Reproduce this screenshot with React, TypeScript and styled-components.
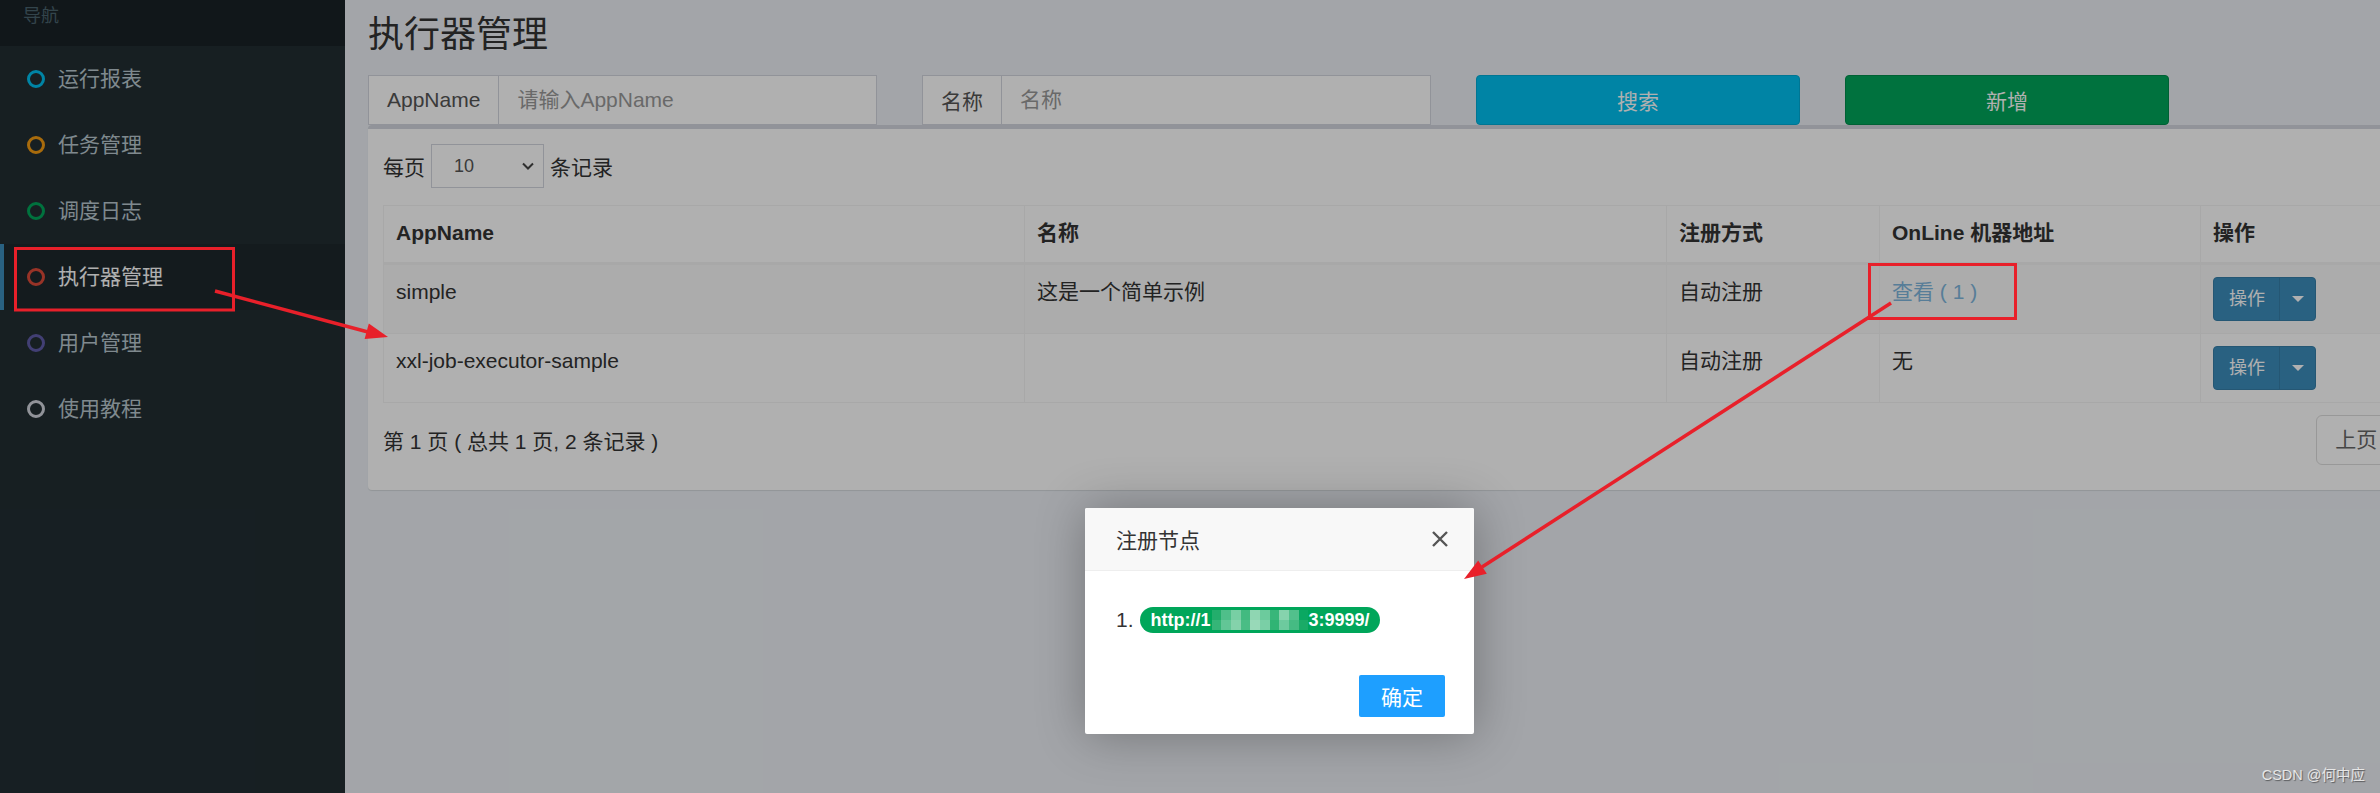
import React from 'react';
import styled, { createGlobalStyle } from 'styled-components';

const FONT = `'Liberation Sans', 'Noto Sans CJK SC', sans-serif`;

const GlobalStyle = createGlobalStyle`
  html, body {
    margin: 0;
    padding: 0;
  }
  body {
    font-family: ${FONT};
    font-size: 21px;
    color: #333;
    background: #ecf0f5;
  }
  * {
    box-sizing: border-box;
  }
`;

const Page = styled.div`
  position: relative;
  display: flex;
  width: 2380px;
  height: 793px;
  overflow: hidden;
`;

/* ---------- sidebar ---------- */

const Sidebar = styled.aside`
  width: 345px;
  flex-shrink: 0;
  background: #222d32;
`;

const NavHeader = styled.div`
  height: 46px;
  padding: 4px 0 0 23px;
  background: #1a2226;
  color: #4b646f;
  font-size: 18px;
  line-height: 24px;
`;

const MenuItem = styled.div<{ $active?: boolean }>`
  display: flex;
  align-items: center;
  gap: 13px;
  height: 66px;
  padding-left: 23px;
  border-left: 4px solid ${({ $active }) => ($active ? '#3c8dbc' : 'transparent')};
  background: ${({ $active }) => ($active ? '#1e282c' : 'transparent')};
  color: ${({ $active }) => ($active ? '#fff' : '#b8c7ce')};
  font-size: 21px;
  line-height: 30px;
`;

const Ring = styled.span<{ $color: string }>`
  flex-shrink: 0;
  width: 18px;
  height: 18px;
  border-radius: 50%;
  border: 3px solid ${({ $color }) => $color};
`;

/* ---------- content ---------- */

const Main = styled.main`
  flex: 1;
  min-width: 0;
  padding: 15px 0 0 23px;
  background: #ecf0f5;
`;

const Title = styled.h1`
  margin: 0;
  font-size: 36px;
  line-height: 40px;
  font-weight: 400;
  color: #333;
`;

const FilterRow = styled.div`
  display: flex;
  gap: 45px;
  margin-top: 20px;
`;

const InputGroup = styled.div`
  display: flex;
  width: 509px;
  height: 50px;
`;

const Addon = styled.span`
  display: flex;
  align-items: center;
  padding: 0 18px;
  border: 1px solid #d2d6de;
  background: #fff;
  color: #555;
`;

const TextInput = styled.input`
  flex: 1;
  min-width: 0;
  padding: 0 18px;
  border: 1px solid #d2d6de;
  border-left: 0;
  background: #fff;
  font-family: ${FONT};
  font-size: 21px;
  color: #555;
  outline: none;
  &::placeholder {
    color: #999;
  }
`;

const ActionButton = styled.button<{ $bg: string; $border: string }>`
  width: 324px;
  height: 50px;
  border-radius: 4px;
  border: 1px solid ${({ $border }) => $border};
  background: ${({ $bg }) => $bg};
  color: #fff;
  font-family: ${FONT};
  font-size: 21px;
`;

const Box = styled.section`
  width: 2171px;
  padding: 15px 15px 25px;
  border-top: 4px solid #d2d6de;
  border-radius: 4px;
  background: #fff;
  box-shadow: 0 1px 1px rgba(0, 0, 0, 0.1);
`;

const LengthRow = styled.div`
  display: flex;
  align-items: center;
  gap: 6px;
  height: 44px;
`;

const SelectBox = styled.div`
  display: flex;
  align-items: center;
  justify-content: space-between;
  width: 113px;
  height: 44px;
  padding: 0 8px 0 22px;
  border: 1px solid #d2d6de;
  font-size: 18px;
  color: #555;
`;

const Table = styled.table`
  width: 2140px;
  margin-top: 17px;
  border-collapse: collapse;
  table-layout: fixed;

  th,
  td {
    padding: 12px;
    border: 1px solid #f4f4f4;
    text-align: left;
    vertical-align: top;
    line-height: 30px;
  }

  th {
    padding-bottom: 14px;
    border-bottom: 3px solid #f4f4f4;
    font-weight: 700;
  }
`;

const Row = styled.tr<{ $striped?: boolean }>`
  background: ${({ $striped }) => ($striped ? '#f9f9f9' : 'transparent')};
`;

const Link = styled.span`
  color: #7fb6dc;
`;

const SplitButton = styled.div`
  display: inline-flex;
  height: 44px;
  border: 1px solid #367fa9;
  border-radius: 4px;
  overflow: hidden;
  background: #3c8dbc;
  color: #fff;
  font-size: 18px;
  vertical-align: top;
`;

const SplitLabel = styled.span`
  display: flex;
  align-items: center;
  padding: 0 14px 0 15px;
`;

const SplitCaret = styled.span`
  display: flex;
  align-items: center;
  justify-content: center;
  width: 36px;
  border-left: 1px solid #367fa9;

  &::after {
    content: '';
    border-top: 6px solid #fff;
    border-left: 6px solid transparent;
    border-right: 6px solid transparent;
  }
`;

const FooterRow = styled.div`
  display: flex;
  align-items: center;
  justify-content: space-between;
  margin-top: 12px;
`;

const Pager = styled.div`
  display: flex;
`;

const PageLink = styled.span<{ $first?: boolean; $last?: boolean }>`
  padding: 9px 18px;
  margin-left: -1px;
  border: 1px solid #ddd;
  border-radius: ${({ $first, $last }) => ($first ? '6px 0 0 6px' : $last ? '0 6px 6px 0' : '0')};
  line-height: 30px;
  color: #666;
`;

/* ---------- overlay ---------- */

const Backdrop = styled.div`
  position: absolute;
  inset: 0;
  background: rgba(0, 0, 0, 0.31);
`;

const Modal = styled.div`
  position: absolute;
  left: 1085px;
  top: 508px;
  width: 389px;
  border-radius: 2px;
  background: #fff;
  box-shadow: 1px 1px 50px rgba(0, 0, 0, 0.3);
`;

const ModalHeader = styled.div`
  display: flex;
  align-items: center;
  justify-content: space-between;
  height: 63px;
  padding: 0 25px 0 31px;
  border-bottom: 1px solid #eee;
  border-radius: 2px 2px 0 0;
  background: #f8f8f8;
  font-size: 21px;
  color: #333;
`;

const ModalBody = styled.div`
  display: flex;
  align-items: center;
  gap: 6px;
  padding: 34px 30px 0 31px;
  line-height: 30px;
  font-size: 21px;
  color: #333;
`;

const Badge = styled.span`
  display: inline-flex;
  align-items: center;
  height: 26px;
  padding: 0 11px;
  border-radius: 13px;
  background: #00a65a;
  color: #fff;
  font-size: 18px;
  font-weight: 700;
`;

const Mosaic = styled.span`
  display: inline-grid;
  grid-template-columns: repeat(10, 9.7px);
  grid-auto-rows: 10px;
  margin-left: 1px;
`;

const Cell = styled.span<{ $c: string }>`
  background: ${({ $c }) => $c};
`;

const ModalFooter = styled.div`
  display: flex;
  justify-content: flex-end;
  padding: 40px 29px 17px;
`;

const OkButton = styled.button`
  height: 42px;
  padding: 0 22px;
  border: 0;
  border-radius: 2px;
  background: #1e9fff;
  color: #fff;
  font-family: ${FONT};
  font-size: 21px;
`;

const Annotations = styled.svg`
  position: absolute;
  left: 0;
  top: 0;
  pointer-events: none;
`;

const Watermark = styled.div`
  position: absolute;
  right: 15px;
  bottom: 9px;
  font-size: 14.5px;
  color: #e6e6e6;
  text-shadow: 1px 1px 1px rgba(0, 0, 0, 0.45);
`;

const menu = [
  { label: '运行报表', color: '#00c0ef' },
  { label: '任务管理', color: '#f39c12' },
  { label: '调度日志', color: '#00a65a' },
  { label: '执行器管理', color: '#dd4b39', active: true },
  { label: '用户管理', color: '#605ca8' },
  { label: '使用教程', color: '#d2d6de' },
];

const mosaicColors = [
  '#23ae6c', '#4fbf8a', '#78cfa4', '#42ba80', '#8fd6b2', '#6ccb9d', '#38b67a', '#86d3ad', '#52c08c', '#0aa862',
  '#35b577', '#62c696', '#84d2ab', '#4abd85', '#98d9b8', '#7acfa6', '#30b474', '#6dca9e', '#45bb83', '#1aab67',
];

const RED = '#e8202a';

const App = () => {
  return (
    <Page>
      <GlobalStyle />
      <Sidebar>
        <NavHeader>导航</NavHeader>
        {menu.map((m) => (
          <MenuItem key={m.label} $active={m.active}>
            <Ring $color={m.color} />
            {m.label}
          </MenuItem>
        ))}
      </Sidebar>

      <Main>
        <Title>执行器管理</Title>
        <FilterRow>
          <InputGroup>
            <Addon>AppName</Addon>
            <TextInput placeholder='请输入AppName' />
          </InputGroup>
          <InputGroup>
            <Addon>名称</Addon>
            <TextInput placeholder='名称' />
          </InputGroup>
          <ActionButton $bg='#00c0ef' $border='#00acd6'>
            搜索
          </ActionButton>
          <ActionButton $bg='#00a65a' $border='#008d4c'>
            新增
          </ActionButton>
        </FilterRow>

        <Box>
          <LengthRow>
            每页
            <SelectBox>
              10
              <svg width='14' height='14' viewBox='0 0 14 14'>
                <path d='M2 4.5l5 5 5-5' fill='none' stroke='#444' strokeWidth='2' />
              </svg>
            </SelectBox>
            条记录
          </LengthRow>

          <Table>
            <colgroup>
              <col style={{ width: 641 }} />
              <col style={{ width: 642 }} />
              <col style={{ width: 213 }} />
              <col style={{ width: 321 }} />
              <col style={{ width: 323 }} />
            </colgroup>
            <thead>
              <tr>
                <th>AppName</th>
                <th>名称</th>
                <th>注册方式</th>
                <th>OnLine 机器地址</th>
                <th>操作</th>
              </tr>
            </thead>
            <tbody>
              <Row $striped>
                <td>simple</td>
                <td>这是一个简单示例</td>
                <td>自动注册</td>
                <td>
                  <Link>查看 ( 1 )</Link>
                </td>
                <td>
                  <SplitButton>
                    <SplitLabel>操作</SplitLabel>
                    <SplitCaret />
                  </SplitButton>
                </td>
              </Row>
              <Row>
                <td>xxl-job-executor-sample</td>
                <td></td>
                <td>自动注册</td>
                <td>无</td>
                <td>
                  <SplitButton>
                    <SplitLabel>操作</SplitLabel>
                    <SplitCaret />
                  </SplitButton>
                </td>
              </Row>
            </tbody>
          </Table>

          <FooterRow>
            <span>第 1 页 ( 总共 1 页, 2 条记录 )</span>
            <Pager>
              <PageLink $first>上页</PageLink>
              <PageLink>1</PageLink>
              <PageLink $last>下页</PageLink>
            </Pager>
          </FooterRow>
        </Box>
      </Main>

      <Backdrop />

      <Modal>
        <ModalHeader>
          注册节点
          <svg width='18' height='18' viewBox='0 0 18 18'>
            <path d='M2 2L16 16M16 2L2 16' stroke='#555' strokeWidth='2.4' />
          </svg>
        </ModalHeader>
        <ModalBody>
          1.
          <Badge>
            http://1
            <Mosaic>
              {mosaicColors.map((c, i) => (
                <Cell key={i} $c={c} />
              ))}
            </Mosaic>
            3:9999/
          </Badge>
        </ModalBody>
        <ModalFooter>
          <OkButton>确定</OkButton>
        </ModalFooter>
      </Modal>

      <Annotations width='2380' height='793'>
        <rect x='15.5' y='248.5' width='218' height='61.5' fill='none' stroke={RED} strokeWidth='3' />
        <line x1='215' y1='291' x2='368' y2='332' stroke={RED} strokeWidth='3.5' />
        <polygon points='388,337 364.6,339 368.8,323.6' fill={RED} />
        <rect x='1869.5' y='264.5' width='146' height='54' fill='none' stroke={RED} strokeWidth='3' />
        <line x1='1891' y1='303' x2='1482' y2='567' stroke={RED} strokeWidth='3.5' />
        <polygon points='1464,579 1478.2,560.4 1486.8,573.8' fill={RED} />
      </Annotations>

      <Watermark>CSDN @何中应</Watermark>
    </Page>
  );
};

export default App;
